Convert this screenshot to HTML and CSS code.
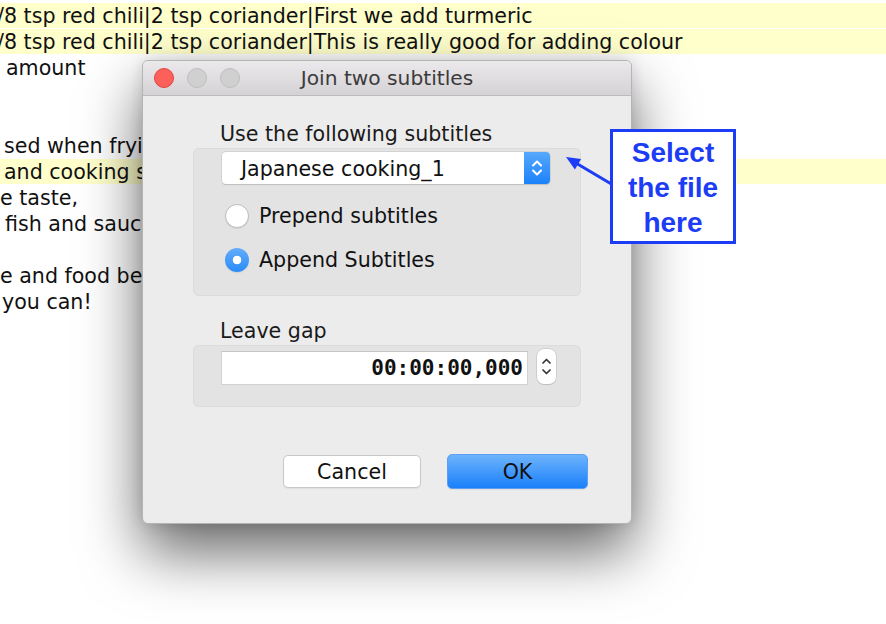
FILE: index.html
```html
<!DOCTYPE html>
<html>
<head>
<meta charset="utf-8">
<title>Join two subtitles</title>
<link rel="stylesheet" href="styles.css">
</head>
<body>
<div class="table">
  <div class="row"><span class="cell i-0">Add the salt and then mix it</span></div>
  <div class="row hl"><span class="cell i-slash">/8 tsp red chili|2 tsp coriander|First we add turmeric</span></div>
  <div class="row hl"><span class="cell i-slash">/8 tsp red chili|2 tsp coriander|This is really good for adding colour</span></div>
  <div class="row"><span class="cell i-7">amount</span></div>
  <div class="row"><span class="cell"></span></div>
  <div class="row"><span class="cell"></span></div>
  <div class="row"><span class="cell i-5">sed when frying</span></div>
  <div class="row hl"><span class="cell i-5">and cooking sauces</span></div>
  <div class="row"><span class="cell i-0">e taste,</span></div>
  <div class="row"><span class="cell i-6">fish and sauces</span></div>
  <div class="row"><span class="cell"></span></div>
  <div class="row"><span class="cell i-0">e and food becomes</span></div>
  <div class="row"><span class="cell i-2">you can!</span></div>
</div>

<div class="dialog">
  <div class="titlebar">
    <div class="lights">
      <span class="light red"></span>
      <span class="light"></span>
      <span class="light"></span>
    </div>
    <div class="title">Join two subtitles</div>
  </div>
  <div class="content">
    <div class="label">Use the following subtitles</div>
    <div class="group group-files">
      <div class="combo">
        <span class="combo-text">Japanese cooking_1</span>
        <span class="combo-btn">
          <svg width="26" height="32" viewBox="0 0 26 32"><path d="M9 13.5 L13 9.5 L17 13.5 M9 18.5 L13 22.5 L17 18.5" fill="none" stroke="#fff" stroke-width="2" stroke-linecap="round" stroke-linejoin="round"/></svg>
        </span>
      </div>
      <div class="radio-row"><span class="radio"></span><span>Prepend subtitles</span></div>
      <div class="radio-row"><span class="radio checked"></span><span>Append Subtitles</span></div>
    </div>
    <div class="label label-gap">Leave gap</div>
    <div class="group group-gap">
      <div class="field">00:00:00,000</div>
      <div class="spinner">
        <svg width="19" height="35" viewBox="0 0 19 35"><path d="M6 14 L9.5 10.5 L13 14 M6 21 L9.5 24.5 L13 21" fill="none" stroke="#333" stroke-width="1.7" stroke-linecap="round" stroke-linejoin="round"/></svg>
      </div>
    </div>
    <div class="buttons">
      <div class="btn">Cancel</div>
      <div class="btn primary">OK</div>
    </div>
  </div>
</div>

<svg class="arrow" width="60" height="45" viewBox="0 0 60 45">
  <line x1="53" y1="35" x2="15" y2="12.5" stroke="#1d3cf6" stroke-width="3"/>
  <polygon points="6,7 21.1,9 14.9,19.4" fill="#1d3cf6"/>
</svg>
<div class="callout">Select<br>the file<br>here</div>
</body>
</html>
```

FILE: styles.css
```css
html, body {
  margin: 0;
  padding: 0;
}
body {
  width: 886px;
  height: 624px;
  overflow: hidden;
  background: #ffffff;
  position: relative;
  font-family: "DejaVu Sans", "Liberation Sans", sans-serif;
  color: #111;
}

/* background table */
.table {
  margin-top: -23px;
  font-size: 20.6px;
}
.row {
  height: 25px;
  margin-bottom: 1px;
  line-height: 27px;
  white-space: nowrap;
  overflow: hidden;
}
.row.hl {
  background: #ffffcc;
}
.cell {
  display: block;
}
.i-slash { text-indent: -3px; }
.i-0 { text-indent: 0; }
.i-2 { text-indent: 2px; }
.i-5 { text-indent: 4px; }
.i-6 { text-indent: 5px; }
.i-7 { text-indent: 6px; }

/* dialog window */
.dialog {
  position: absolute;
  left: 142px;
  top: 60px;
  width: 490px;
  height: 464px;
  box-sizing: border-box;
  border: 1px solid #b4b4b4;
  border-radius: 6px;
  background: #ececec;
  box-shadow: 0 28px 60px rgba(0, 0, 0, 0.6), 0 0 14px rgba(0, 0, 0, 0.12);
  overflow: hidden;
}
.titlebar {
  height: 34px;
  border-bottom: 1px solid #bdbbbd;
  background: linear-gradient(#ebe9eb, #d4d2d4);
  display: grid;
  grid-template-columns: 1fr auto 1fr;
  align-items: center;
}
.lights {
  display: flex;
  gap: 13px;
  padding-left: 11px;
}
.light {
  width: 18px;
  height: 18px;
  border-radius: 50%;
  background: #d1d0d1;
  border: 1px solid #bfbebf;
}
.light.red {
  background: #fc605b;
  border-color: #e0443e;
}
.title {
  font-size: 20.2px;
  color: #3b3b3b;
}

.content {
  padding: 26px 0 0 50px;
  font-size: 20.6px;
}
.label {
  height: 22px;
  line-height: 24px;
  margin-left: 27px;
  color: #1a1a1a;
}
.group {
  width: 388px;
  box-sizing: border-box;
  margin-top: 4px;
  background: #e3e3e3;
  border-radius: 6px;
  box-shadow: inset 0 0 0 1px #dcdcdc;
}
.group-files {
  height: 148px;
  padding: 4px 0 0 29px;
}
.combo {
  width: 328px;
  height: 32px;
  display: flex;
  align-items: center;
  background: #fff;
  border-radius: 4px;
  box-shadow: 0 0 0 0.5px #c3c3c3, 0 1px 1px rgba(0, 0, 0, 0.18);
  margin-bottom: 10px;
}
.combo-text {
  flex: 1;
  padding-left: 19px;
  padding-top: 2px;
  color: #111;
}
.combo-btn {
  width: 26px;
  height: 32px;
  border-radius: 0 4px 4px 0;
  background: linear-gradient(#56a8fb, #1c82f9);
  display: flex;
}
.radio-row {
  height: 44px;
  display: flex;
  align-items: center;
  gap: 10px;
  margin-left: 3px;
  color: #111;
}
.radio {
  width: 24px;
  height: 24px;
  box-sizing: border-box;
  border-radius: 50%;
  background: #fff;
  border: 1px solid #bcbcbc;
  box-shadow: 0 1px 1px rgba(0, 0, 0, 0.08);
}
.radio.checked {
  border: none;
  background: radial-gradient(circle, #fff 0, #fff 4px, transparent 4.6px), linear-gradient(#63adfb, #2a8bf8);
}
.label-gap {
  margin-top: 23px;
}
.group-gap {
  height: 62px;
  display: flex;
  align-items: flex-start;
  padding: 6px 0 0 28px;
}
.field {
  width: 307px;
  height: 34px;
  box-sizing: border-box;
  background: #fff;
  border: 1px solid #d2d2d2;
  border-top-color: #c4c4c4;
  font-family: "DejaVu Sans Mono", "Liberation Mono", monospace;
  font-weight: bold;
  font-size: 21px;
  line-height: 32px;
  text-align: right;
  padding-right: 4px;
  color: #111;
}
.spinner {
  width: 19px;
  height: 35px;
  margin-left: 9px;
  margin-top: -2px;
  background: #fff;
  border-radius: 7px;
  box-shadow: 0 0 0 0.5px #bdbdbd, 0 1px 1px rgba(0, 0, 0, 0.15);
  display: flex;
}

.buttons {
  margin-top: 47px;
  margin-right: 43px;
  display: flex;
  justify-content: flex-end;
  align-items: center;
  gap: 26px;
}
.btn {
  width: 138px;
  height: 33px;
  box-sizing: border-box;
  border-radius: 5px;
  background: #fff;
  border: 1px solid #c8c8c8;
  box-shadow: 0 1px 1px rgba(0, 0, 0, 0.06);
  display: flex;
  align-items: center;
  justify-content: center;
  color: #111;
}
.btn.primary {
  width: 141px;
  height: 35px;
  border-color: #5d9ff3;
  background: linear-gradient(#6db3fc, #1a80fa);
}

/* annotation overlay */
.arrow {
  position: absolute;
  left: 560px;
  top: 150px;
}
.callout {
  position: absolute;
  left: 610px;
  top: 129px;
  width: 126px;
  height: 115px;
  box-sizing: border-box;
  border: 3px solid #1d3cf6;
  background: #fff;
  color: #1d3cf6;
  font-family: "Liberation Sans", Arial, sans-serif;
  font-weight: bold;
  font-size: 28px;
  line-height: 35px;
  text-align: center;
  display: flex;
  align-items: center;
  justify-content: center;
  padding-top: 2px;
}
```
